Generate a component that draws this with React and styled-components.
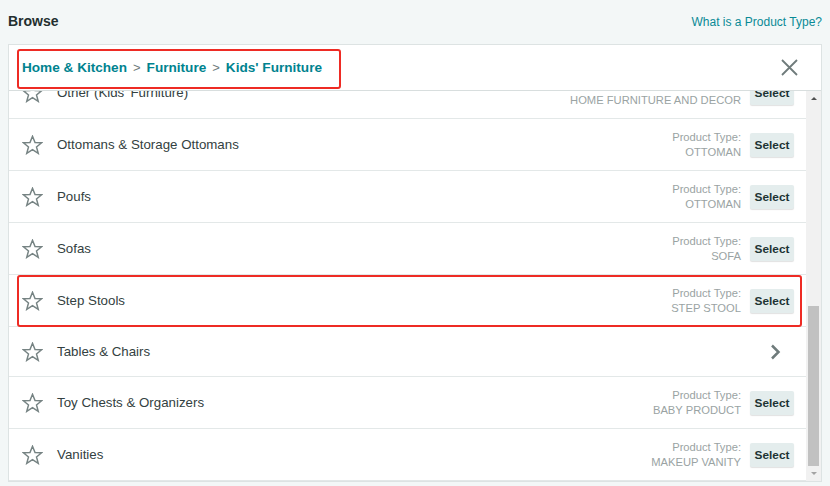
import React from 'react';
import styled, { createGlobalStyle } from 'styled-components';

const GlobalStyle = createGlobalStyle`
  html, body {
    margin: 0;
    padding: 0;
    background: #f3f7f7;
  }
  body {
    font-family: "Liberation Sans", Arial, sans-serif;
  }
`;

const Page = styled.div`
  width: 830px;
  height: 486px;
  box-sizing: border-box;
  padding: 0 8px;
  background: #f3f7f7;
  display: flex;
  flex-direction: column;
  overflow: hidden;
`;

const TopBar = styled.div`
  height: 44px;
  display: flex;
  align-items: center;
  justify-content: space-between;
`;

const Title = styled.h2`
  margin: 0 0 2px;
  font-size: 14px;
  font-weight: 700;
  color: #232f2f;
`;

const HelpLink = styled.a`
  font-size: 12px;
  color: #0a8a96;
  text-decoration: none;
`;

const Panel = styled.div`
  height: 438px;
  box-sizing: border-box;
  border: 1px solid #dde3e3;
  background: #fff;
  display: flex;
  flex-direction: column;
`;

const Header = styled.div`
  height: 46px;
  box-sizing: border-box;
  flex-shrink: 0;
  display: flex;
  align-items: flex-start;
  justify-content: space-between;
  padding: 4px 22px 0 8px;
  border-bottom: 1px solid #d8dede;
`;

const Breadcrumb = styled.div`
  height: 40px;
  box-sizing: border-box;
  display: flex;
  align-items: center;
  gap: 6px;
  padding: 0 17px 3px 3px;
  border: 2px solid ${(p) => (p.$marked ? '#ee2b24' : 'transparent')};
  border-radius: 3px;
  font-size: 13.6px;
  font-weight: 700;
`;

const Crumb = styled.span`
  color: #00838f;
`;

const Sep = styled.span`
  color: #6f7b7b;
  font-weight: 400;
  font-size: 13px;
`;

const CloseButton = styled.button`
  margin-top: 8px;
  width: 20px;
  height: 20px;
  padding: 0;
  border: 0;
  background: none;
  display: flex;
  align-items: center;
  justify-content: center;
`;

const Body = styled.div`
  flex: 1;
  min-height: 0;
  display: flex;
`;

const Viewport = styled.div`
  flex: 1;
  overflow: hidden;
`;

const Rows = styled.ul`
  list-style: none;
  margin: ${(p) => -p.$offset}px 0 0;
  padding: 0;
`;

const Row = styled.li`
  position: relative;
  height: ${(p) => (p.$short ? 50 : 52)}px;
  box-sizing: border-box;
  display: flex;
  align-items: center;
  padding: 0 12px 0 13px;
  border-bottom: 1px solid #e3e8e8;

  &::after {
    content: '';
    display: ${(p) => (p.$marked ? 'block' : 'none')};
    position: absolute;
    top: 0;
    bottom: -1px;
    left: 8px;
    right: 4px;
    border: 2px solid #ee2b24;
    border-radius: 3px;
    pointer-events: none;
  }
`;

const Name = styled.span`
  flex: 1;
  margin-left: 14px;
  font-size: 13.3px;
  color: #334141;
`;

const Meta = styled.div`
  text-align: right;
  font-size: 11.2px;
  line-height: 15px;
  color: #9aa3a3;
`;

const SelectButton = styled.button`
  margin-left: 9px;
  width: 44px;
  height: 24px;
  padding: 0;
  border: 0;
  border-radius: 2px;
  background: #e4eded;
  box-shadow: 0 1px 1px rgba(0, 0, 0, 0.12);
  font-family: "Liberation Sans", Arial, sans-serif;
  font-size: 11.8px;
  font-weight: 700;
  color: #1d3434;
`;

const Chevron = styled.span`
  margin-right: 13px;
  display: flex;
`;

const Scrollbar = styled.div`
  width: 15px;
  flex-shrink: 0;
  background: #f1f1f1;
  display: flex;
  flex-direction: column;
`;

const ScrollArrow = styled.div`
  height: 17px;
  display: flex;
  align-items: center;
  justify-content: center;

  &::before {
    content: '';
    border-left: 3px solid transparent;
    border-right: 3px solid transparent;
    ${(p) => (p.$down ? 'border-top' : 'border-bottom')}: 3px solid ${(p) =>
      p.$down ? '#a3a3a3' : '#505050'};
  }
`;

const Track = styled.div`
  flex: 1;
  display: flex;
  flex-direction: column;
  padding: 0 2px;
`;

const Thumb = styled.div`
  margin-top: ${(p) => p.$top}px;
  height: ${(p) => p.$size}px;
  background: #c1c1c1;
`;

function StarIcon() {
  return (
    <svg width="21" height="20" viewBox="0 0 24 23" fill="none">
      <polygon
        points="12,1.5 14.9,8.6 22.5,8.9 16.6,13.7 18.6,21.1 12,16.9 5.4,21.1 7.4,13.7 1.5,8.9 9.1,8.6"
        stroke="#768383"
        strokeWidth="1.7"
        strokeLinejoin="miter"
      />
    </svg>
  );
}

function CloseIcon() {
  return (
    <svg width="17" height="17" viewBox="0 0 17 17">
      <path d="M1 1L16 16M16 1L1 16" stroke="#6f7b7b" strokeWidth="1.8" />
    </svg>
  );
}

function ChevronIcon() {
  return (
    <svg width="11" height="16" viewBox="0 0 11 16">
      <path d="M2 1.5L8.5 8L2 14.5" stroke="#6f7b7b" strokeWidth="2.5" fill="none" />
    </svg>
  );
}

const items = [
  { name: "Other (Kids' Furniture)", type: 'HOME FURNITURE AND DECOR' },
  { name: 'Ottomans & Storage Ottomans', type: 'OTTOMAN' },
  { name: 'Poufs', type: 'OTTOMAN' },
  { name: 'Sofas', type: 'SOFA' },
  { name: 'Step Stools', type: 'STEP STOOL', marked: true },
  { name: 'Tables & Chairs', folder: true },
  { name: 'Toy Chests & Organizers', type: 'BABY PRODUCT' },
  { name: 'Vanities', type: 'MAKEUP VANITY' },
];

const path = ['Home & Kitchen', 'Furniture', "Kids' Furniture"];

export default function App() {
  return (
    <Page>
      <GlobalStyle />
      <TopBar>
        <Title>Browse</Title>
        <HelpLink href="#">What is a Product Type?</HelpLink>
      </TopBar>
      <Panel>
        <Header>
          <Breadcrumb $marked>
            {path.map((p, i) => (
              <React.Fragment key={p}>
                {i > 0 && <Sep>&gt;</Sep>}
                <Crumb>{p}</Crumb>
              </React.Fragment>
            ))}
          </Breadcrumb>
          <CloseButton aria-label="Close">
            <CloseIcon />
          </CloseButton>
        </Header>
        <Body>
          <Viewport>
            <Rows $offset={24}>
              {items.map((it) => (
                <Row key={it.name} $marked={it.marked} $short={it.folder}>
                  <StarIcon />
                  <Name>{it.name}</Name>
                  {it.folder ? (
                    <Chevron>
                      <ChevronIcon />
                    </Chevron>
                  ) : (
                    <>
                      <Meta>
                        Product Type:
                        <br />
                        {it.type}
                      </Meta>
                      <SelectButton>Select</SelectButton>
                    </>
                  )}
                </Row>
              ))}
            </Rows>
          </Viewport>
          <Scrollbar>
            <ScrollArrow />
            <Track>
              <Thumb $top={199} $size={160} />
            </Track>
            <ScrollArrow $down />
          </Scrollbar>
        </Body>
      </Panel>
    </Page>
  );
}
